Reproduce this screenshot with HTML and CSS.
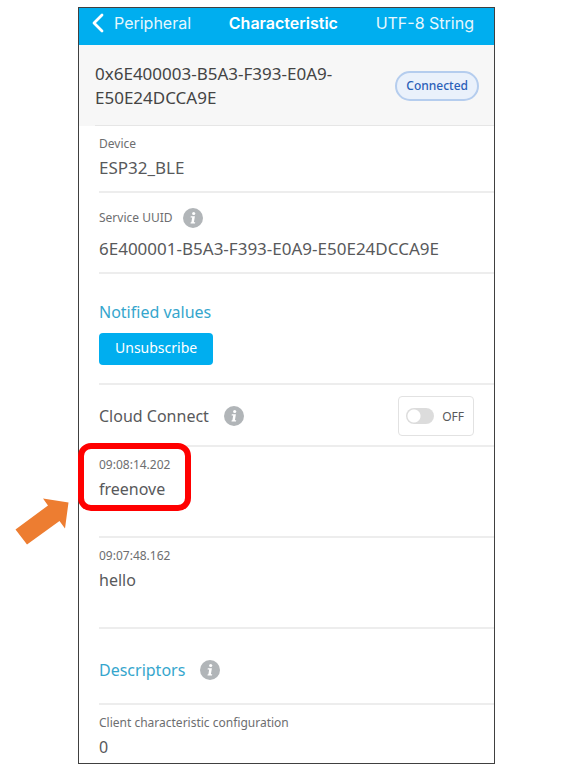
FILE: index.html
```html
<!DOCTYPE html>
<html lang="en">
<head>
<meta charset="utf-8">
<meta name="viewport" content="width=device-width, initial-scale=1">
<title>Characteristic</title>
<link rel="stylesheet" href="styles.css">
</head>
<body>
<svg class="defs" aria-hidden="true">
  <symbol id="info" viewBox="0 0 20 20">
    <circle cx="10" cy="10" r="10" fill="#b1b5b8"/>
    <circle cx="10.700" cy="5.500" r="1.600" fill="#fff"/>
    <path d="M7.800 8.200h4.100l-1 6h1.300l-.2 1.400H7.500l.2-1.400h.7l.8-4.600H7.600z" fill="#fff"/>
  </symbol>
</svg>
<main class="phone">
  <header class="bar">
    <a class="back" href="#"><svg class="chevron" viewBox="0 0 12 20" aria-hidden="true"><path d="M10 2L2 10l8 8" fill="none" stroke="#fff" stroke-width="2.8" stroke-linecap="round" stroke-linejoin="round"/></svg>Peripheral</a>
    <h1 class="title">Characteristic</h1>
    <a class="format" href="#">UTF-8 String</a>
  </header>
  <section class="summary">
    <p class="uuid">0x6E400003-B5A3-F393-E0A9-<wbr>E50E24DCCA9E</p>
    <span class="status">Connected</span>
  </section>
  <div class="content">
    <section class="row">
      <p class="label">Device</p>
      <p class="value code">ESP32_BLE</p>
    </section>
    <section class="row service">
      <p class="label with-icon">Service UUID <svg class="info" role="img" aria-label="Info"><use href="#info"/></svg></p>
      <p class="value code">6E400001-B5A3-F393-E0A9-E50E24DCCA9E</p>
    </section>
    <section class="row notified">
      <h2 class="heading">Notified values</h2>
      <button class="unsubscribe" type="button">Unsubscribe</button>
    </section>
    <section class="row cloud">
      <h2 class="value">Cloud Connect</h2>
      <svg class="info" role="img" aria-label="Info"><use href="#info"/></svg>
      <label class="switch"><input class="toggle" type="checkbox" role="switch">OFF</label>
    </section>
    <section class="row entry">
      <p class="label">09:08:14.202</p>
      <p class="value">freenove</p>
      <span class="highlight"></span>
      <svg class="arrow" viewBox="0 0 54 47" aria-hidden="true"><path d="M.5 31.5L33 7.5 28 .5l25.500 4-3.500 26-5.500-7.500L12 46.500z" fill="#ed7d31"/></svg>
    </section>
    <section class="row entry">
      <p class="label">09:07:48.162</p>
      <p class="value">hello</p>
    </section>
    <section class="row descriptors">
      <h2 class="heading">Descriptors</h2>
      <svg class="info" role="img" aria-label="Info"><use href="#info"/></svg>
    </section>
    <section class="row last">
      <p class="label">Client characteristic configuration</p>
      <p class="value">0</p>
    </section>
  </div>
</main>
</body>
</html>
```
FILE: styles.css
```css
* {
  box-sizing: border-box;
}

body {
  margin: 0;
  padding: 7px 81px 11px 78px;
  background: #fff;
  color: #58595b;
  font-family: "Noto Sans", sans-serif;
  font-size: 16px;
}

h1, h2, p {
  margin: 0;
  font-weight: 400;
}

a {
  color: inherit;
  text-decoration: none;
}

.defs {
  display: none;
}

.phone {
  border: 1px solid #404040;
}

.bar {
  display: flex;
  align-items: center;
  justify-content: space-between;
  height: 37px;
  padding: 0 20px 7px 13px;
  background: #00aeef;
  color: #e6f7fd;
  font-family: Inter, sans-serif;
  font-size: 16px;
}

.back {
  display: flex;
  align-items: center;
  gap: 10px;
}

.chevron {
  width: 12px;
  height: 20px;
}

.title {
  color: #fff;
  font-size: 16px;
  font-weight: 600;
}

.summary {
  display: flex;
  align-items: center;
  justify-content: space-between;
  height: 81px;
  padding: 0 15px 0 16px;
  background:
    linear-gradient(#e6e6e6, #e6e6e6) 16px 100% / 100% 1px no-repeat,
    #f7f7f7;
}

.uuid {
  color: #444;
  font-size: 17px;
  line-height: 24px;
}

.status {
  padding: 0 9px;
  border: 2px solid #b5cdee;
  border-radius: 15px;
  background: #eaf1fb;
  color: #2a60b8;
  font-size: 12px;
  font-weight: 500;
  line-height: 26px;
}

.content {
  padding-left: 20px;
}

.row {
  padding: 8px 0 9px;
  border-bottom: 2px solid #ededed;
}

.label {
  color: #6d6e70;
  font-size: 12px;
  line-height: 20px;
}

.value,
.heading {
  font-size: 16px;
  line-height: 28px;
}

.code {
  font-size: 17px;
}

.heading {
  color: #35a6cd;
}

.info {
  width: 20px;
  height: 20px;
}

.with-icon {
  display: flex;
  align-items: center;
  gap: 10px;
}

.service {
  padding-top: 15px;
}

.service .value {
  margin-top: 7px;
}

.notified {
  padding: 24px 0 18px;
}

.unsubscribe {
  display: block;
  margin-top: 7px;
  padding: 0 16px 3px;
  height: 32px;
  border: 0;
  border-radius: 4px;
  background: #00aeef;
  color: #fff;
  font: 14px "Noto Sans", sans-serif;
}

.cloud,
.descriptors {
  display: flex;
  align-items: center;
  gap: 15px;
}

.cloud {
  padding: 11px 20px 9px 0;
}

.switch {
  display: flex;
  align-items: center;
  gap: 8px;
  height: 40px;
  margin-left: auto;
  padding: 0 9px 0 7px;
  border: 1px solid #e2e2e2;
  border-radius: 4px;
  font-size: 12px;
}

.toggle {
  appearance: none;
  width: 28px;
  height: 16px;
  margin: 0;
  border-radius: 8px;
  background: radial-gradient(circle at 8px 8px, #fff 6px, #dcdcdc 7px);
}

.entry {
  position: relative;
  min-height: 91px;
}

.highlight {
  position: absolute;
  top: -4px;
  left: -21px;
  width: 113px;
  height: 68px;
  border: 6px solid #f00;
  border-radius: 13px;
}

.arrow {
  position: absolute;
  top: 51px;
  left: -84px;
  width: 54px;
  height: 47px;
}

.descriptors {
  padding: 27px 0 19px;
}

.last {
  padding-bottom: 2px;
  border-bottom: 0;
}
```
